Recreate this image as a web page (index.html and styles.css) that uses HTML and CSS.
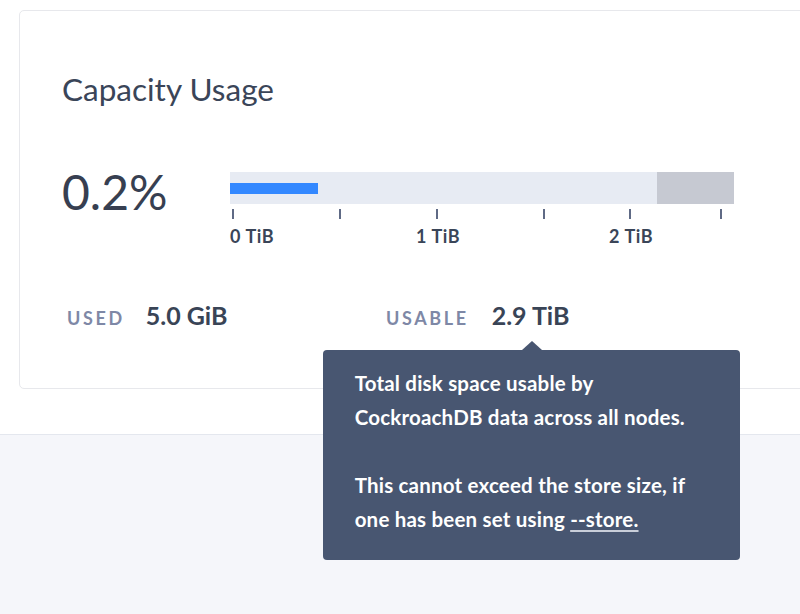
FILE: index.html
```html
<!DOCTYPE html>
<html>
<head>
<meta charset="utf-8">
<link rel="stylesheet" href="styles.css">
</head>
<body>
<div class="top">
  <section class="card">
    <h2 class="title">Capacity Usage</h2>
    <div class="usage">
      <div class="pct">0.2%</div>
      <div class="chart">
        <div class="bar">
          <div class="fill" style="width:17.5%"></div>
          <div class="cap" style="width:15.3%"></div>
        </div>
        <div class="axis">
          <span class="tick" style="left:0.4%"></span>
          <span class="tick" style="left:21.6%"></span>
          <span class="tick" style="left:40.9%"></span>
          <span class="tick" style="left:62.1%"></span>
          <span class="tick" style="left:79.2%"></span>
          <span class="tick" style="left:97.2%"></span>
        </div>
        <div class="labels">
          <span class="lbl first" style="left:0%">0 TiB</span>
          <span class="lbl" style="left:41.3%">1 TiB</span>
          <span class="lbl" style="left:79.6%">2 TiB</span>
        </div>
      </div>
    </div>
    <div class="stats">
      <div class="stat">
        <span class="label">USED</span>
        <span class="value">5.0 GiB</span>
      </div>
      <div class="stat">
        <span class="label">USABLE</span>
        <span class="value anchor">2.9 TiB
          <div class="tooltip">
            <p>Total disk space usable by<br>CockroachDB data across all nodes.</p>
            <p>This cannot exceed the store size, if<br>one has been set using <a class="link">--store.</a></p>
          </div>
        </span>
      </div>
    </div>
  </section>
</div>
<div class="bottom"></div>
</body>
</html>
```

FILE: styles.css
```css
html, body {
  margin: 0;
  padding: 0;
}
body {
  width: 800px;
  height: 614px;
  overflow: hidden;
  background: #ffffff;
  font-family: Lato, "Liberation Sans", sans-serif;
  color: #394456;
}
.top {
  height: 424px;
  padding: 10px 0 0 19px;
  border-bottom: 1px solid #e4e7ee;
  background: #ffffff;
}
.card {
  width: 820px;
  height: 379px;
  box-sizing: border-box;
  border: 1px solid #e7e8ec;
  border-radius: 5px;
  background: #ffffff;
  padding: 58px 0 0 42px;
  position: relative;
  z-index: 1;
}
.title {
  margin: 0;
  font-size: 31.5px;
  line-height: 40px;
  font-weight: 400;
  color: #3a4558;
}
.usage {
  display: flex;
  margin-top: 63px;
}
.pct {
  width: 168px;
  font-size: 48px;
  line-height: 40px;
  font-weight: 400;
  color: #373f51;
}
.chart {
  width: 504px;
}
.bar {
  height: 32px;
  background: #e7ebf3;
  display: flex;
  align-items: center;
  justify-content: space-between;
}
.fill {
  height: 11px;
  background: #3388ff;
}
.cap {
  height: 32px;
  background: #c6c9d2;
}
.axis {
  position: relative;
  height: 10px;
  margin-top: 5px;
}
.tick {
  position: absolute;
  top: 0;
  width: 2px;
  height: 10px;
  background: #5f6a85;
}
.labels {
  position: relative;
  height: 24px;
  margin-top: 5px;
}
.lbl {
  position: absolute;
  top: 0;
  transform: translateX(-50%);
  white-space: nowrap;
  font-size: 18px;
  line-height: 24px;
  font-weight: 700;
  color: #3a4558;
  letter-spacing: 0.6px;
}
.lbl.first {
  transform: none;
}
.stats {
  display: flex;
  margin-top: 52px;
  margin-left: 5px;
}
.stat {
  width: 319px;
  display: flex;
  align-items: baseline;
  gap: 21px;
}
.stat + .stat {
  gap: 23px;
}
.label {
  font-size: 18px;
  font-weight: 700;
  letter-spacing: 2.6px;
  color: #7e88a6;
}
.value {
  font-size: 25px;
  line-height: 30px;
  font-weight: 700;
  color: #394456;
}
.anchor {
  position: relative;
}
.tooltip {
  position: absolute;
  left: -169px;
  top: 50px;
  width: 417px;
  box-sizing: border-box;
  padding: 16px 32px 24px;
  background: #485671;
  border-radius: 4px;
  color: #ffffff;
  font-size: 20.5px;
  line-height: 34px;
  font-weight: 700;
  letter-spacing: 0.2px;
  display: flex;
  flex-direction: column;
  gap: 34px;
}
.tooltip::before {
  content: "";
  position: absolute;
  top: -9px;
  left: 199px;
  border-left: 10px solid transparent;
  border-right: 10px solid transparent;
  border-bottom: 9px solid #485671;
}
.tooltip p {
  margin: 0;
  white-space: nowrap;
}
.link {
  color: #ffffff;
  text-decoration: underline;
  text-underline-offset: 3px;
  text-decoration-color: #c9ced9;
}
.bottom {
  height: 180px;
  background: #f5f6fa;
}
```
